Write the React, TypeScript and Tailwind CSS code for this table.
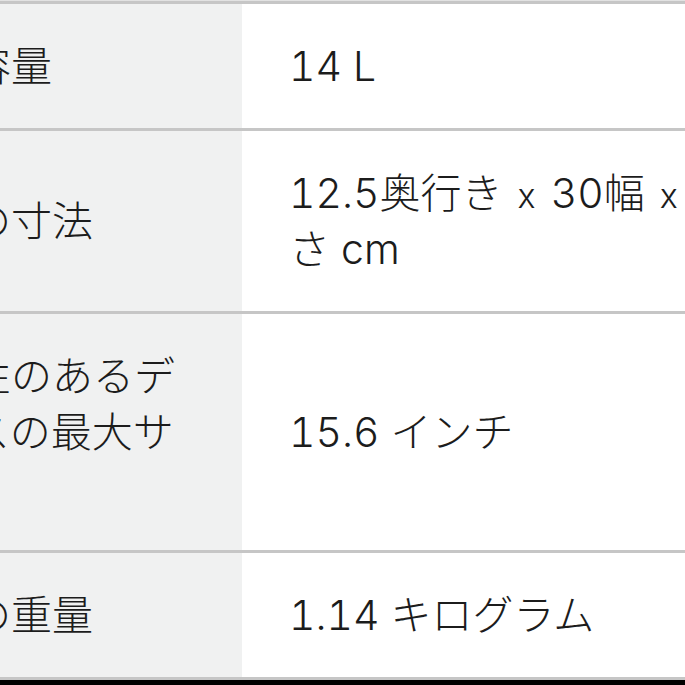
function Times() {
  return <span className="mx-[4px] text-[34px] leading-none">x</span>;
}

const ROWS: Array<{ label: string; value: React.ReactNode }> = [
  { label: '収納容量', value: '14 L' },
  {
    label: '製品の寸法',
    value: (
      <>
        12.5奥行き <Times /> 30幅 <Times /> 43高
        <br />
        さ cm
      </>
    ),
  },
  { label: '互換性のあるデバイスの最大サイズ', value: '15.6 インチ' },
  { label: '商品の重量', value: '1.14 キログラム' },
];

export default function App() {
  return (
    <div className="h-[685px] w-[685px] overflow-hidden bg-white">
      <div
        className="-ml-[159px] w-[1100px] text-[41px] leading-[56px] font-light text-[#1c1c1c] tabular-nums"
        style={{ fontFamily: 'Inter, "Noto Sans CJK JP", sans-serif' }}
      >
        <div className="h-px bg-[#e2e2e2]" />
        <table className="w-full border-collapse">
          <tbody>
            {ROWS.map((row) => (
              <tr key={row.label} className="border-t-[3px] border-[#c6c6c6]">
                <td className="w-[401px] bg-[#f0f1f1] px-[47px] py-[34px] align-middle">{row.label}</td>
                <td className="bg-white px-[47px] py-[34px] align-middle whitespace-nowrap">{row.value}</td>
              </tr>
            ))}
          </tbody>
        </table>
        <div className="h-[3px] bg-[#c6c6c6]" />
        <div className="h-[10px] bg-black" />
      </div>
    </div>
  );
}
